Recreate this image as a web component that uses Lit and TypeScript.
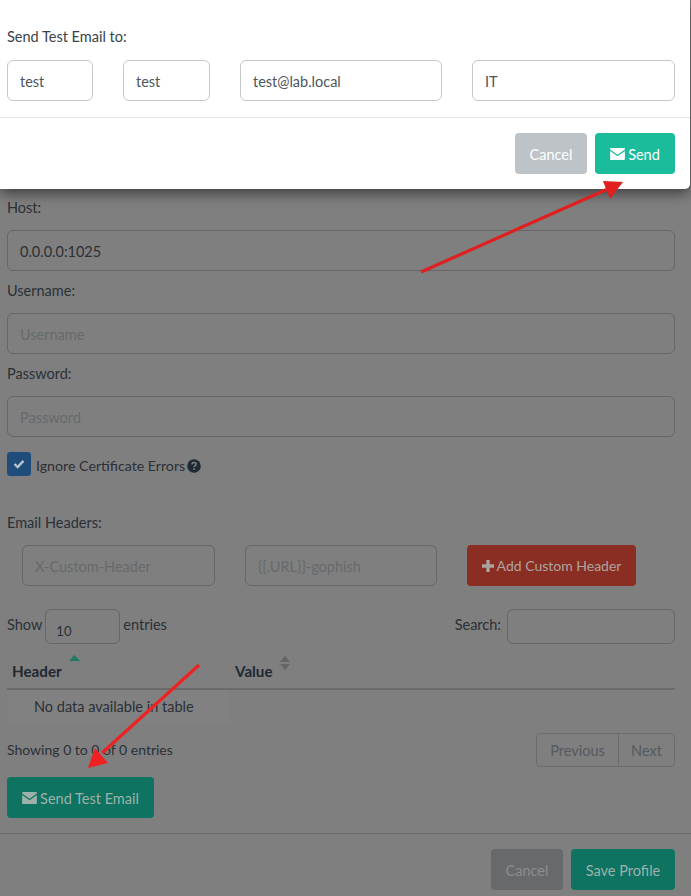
import { LitElement, html, css, svg } from "lit";
import { customElement } from "lit/decorators.js";

const envelope = () => html`<svg class="env" viewBox="0 0 16 13" aria-hidden="true">
  <path fill="currentColor" d="M1.2 0H14.8C15.5 0 16 .5 16 1.2V1.6L8 7.4 0 1.6V1.2C0 .5.5 0 1.2 0Z"/>
  <path fill="currentColor" d="M0 3.2 8 9 16 3.2V11.8C16 12.5 15.5 13 14.8 13H1.2C.5 13 0 12.5 0 11.8Z"/>
</svg>`;

@customElement("app-root")
export class AppRoot extends LitElement {
  static styles = css`
    :host { display: block; width: 691px; height: 896px; }
    * { box-sizing: border-box; }
    .page {
      position: relative; width: 691px; height: 896px; overflow: hidden;
      background: #7f7f7f; color: #2b3036;
      font-family: "Lato", "Liberation Sans", sans-serif; font-size: 14.5px; line-height: 20px;
    }
    .form { display: flex; flex-direction: column; padding: 197px 16px 0 7px; }
    label, .label { display: block; height: 20px; padding-top: 1px; }
    .gap-label { margin-top: 9px; }
    .field { margin-top: 13px; }
    input {
      display: block; width: 100%; height: 41px; padding: 1px 12px 0; margin: 0;
      border: 1px solid #666; border-radius: 6px; background: transparent;
      font: inherit; color: #2b3036; outline: none;
    }
    input::placeholder { color: #666a6d; opacity: 1; }
    .check-row { display: flex; align-items: center; gap: 5px; margin-top: 15px; height: 24px; font-size: 14.2px; }
    .check {
      width: 24px; height: 24px; border-radius: 3px; background: #1e4d7b;
      display: flex; align-items: center; justify-content: center;
    }
    .check svg { width: 12px; height: 10px; }
    .check-text { margin-top: 4px; }
    .help { width: 14px; height: 14px; margin: 4px 0 0 -3px; }
    .headers-label { margin-top: 36px; }
    .header-row { display: flex; margin-top: 13px; padding-left: 15px; }
    .hname { width: 193px; flex: none; }
    .hvalue { width: 192px; flex: none; margin-left: 30px; }
    .btn {
      display: inline-flex; align-items: center; justify-content: center; gap: 3px;
      height: 41px; padding-top: 2px; border-radius: 4px; white-space: nowrap;
    }
    .add { width: 169px; margin-left: 30px; padding-top: 0; background: #8a2d22; color: #ada49f; font-size: 14px; }
    .add svg { width: 12px; height: 12px; }
    .table-tools { display: flex; align-items: center; margin-top: 23px; height: 35px; }
    .table-tools span { margin-bottom: 4px; }
    .len { width: 75px; height: 35px; margin: 0 3px 0 3px; padding: 9px 10px 0; font-size: 13px; }
    .table-tools .search-label { margin-left: auto; margin-right: 6px; }
    .search { width: 168px; height: 35px; }
    .thead {
      display: grid; grid-template-columns: 223px 1fr; height: 46px;
      border-bottom: 2px solid #6b6b6b; font-weight: 700; font-size: 15.2px; color: #1f2833;
    }
    .th { position: relative; padding: 17px 5px 0; }
    .caret { position: absolute; }
    .caret-up { left: 62px; top: 11px; width: 11px; height: 6px; }
    .caret-both { left: 50px; top: 12px; width: 10px; height: 14px; }
    .row { width: 223px; height: 34px; padding-left: 27px; display: flex; align-items: center; background: #818181; }
    .footer { display: flex; align-items: center; justify-content: space-between; margin-top: 9px; height: 34px; }
    .info { font-size: 14px; }
    .pager { display: flex; height: 34px; border: 1px solid #6d6d6d; border-radius: 4px; color: #555a5e; }
    .pager span { display: flex; align-items: center; justify-content: center; padding-top: 1px; }
    .prev { width: 82px; border-right: 1px solid #6d6d6d; }
    .next { width: 55px; }
    .test { width: 147px; margin-top: 10px; background: #0e7360; color: #9fb1ab; }
    .env { width: 15px; height: 12px; flex: none; margin-top: -1px; }
    hr { margin: 15px -16px 0 -7px; border: 0; border-top: 1px solid #6e6e6e; }
    .actions { display: flex; justify-content: flex-end; gap: 8px; margin-top: 15px; }
    .cancel-dim { width: 72px; background: #68696b; color: #8b8d8f; }
    .save { width: 104px; background: #0e7360; color: #9fb1ab; }

    .modal {
      position: absolute; left: 0; top: 0; width: 690px; height: 189px;
      background: #fff; border-bottom-right-radius: 5px;
      box-shadow: 0 4px 14px rgba(0,0,0,.55);
      display: flex; flex-direction: column; color: #37424a;
    }
    .modal-body { padding: 26px 15px 0 7px; height: 117px; }
    .modal-inputs { display: flex; margin-top: 14px; }
    .modal-inputs input { border-color: #c4c8cb; color: #4c565d; }
    .m1 { width: 86px; flex: none; }
    .m2 { width: 87px; flex: none; margin-left: 30px; }
    .m3 { width: 202px; flex: none; margin-left: 30px; }
    .m4 { width: 203px; flex: none; margin-left: 30px; }
    .modal-foot {
      border-top: 1px solid #e5e5e5; padding: 15px 15px 0 0;
      display: flex; justify-content: flex-end; gap: 8px;
    }
    .mcancel { width: 72px; background: #bdc3c7; color: #fff; }
    .msend { width: 80px; background: #1abc9c; color: #fff; }
    .arrows { position: absolute; inset: 0; width: 691px; height: 896px; pointer-events: none; }
  `;

  render() {
    return html`<div class="page">
      <div class="form">
        <label>Host:</label>
        <input class="field" value="0.0.0.0:1025" />
        <label class="gap-label">Username:</label>
        <input class="field" placeholder="Username" />
        <label class="gap-label">Password:</label>
        <input class="field" placeholder="Password" />
        <div class="check-row">
          <div class="check">
            <svg viewBox="0 0 12 10"><path d="M1.5 5 4.6 8 10.5 1.8" fill="none" stroke="#b7c4d1" stroke-width="2.4"/></svg>
          </div>
          <span class="check-text">Ignore Certificate Errors</span>
          <svg class="help" viewBox="0 0 14 14">
            <circle cx="7" cy="7" r="6.8" fill="#1f2a35"/>
            <path d="M4.9 5.4C5 4.2 5.9 3.6 7 3.6 8.2 3.6 9.1 4.3 9.1 5.3 9.1 6.6 7.1 6.7 7.1 8.2" fill="none" stroke="#7f7f7f" stroke-width="1.5"/>
            <rect x="6.2" y="9.2" width="1.7" height="1.7" fill="#7f7f7f"/>
          </svg>
        </div>
        <label class="headers-label">Email Headers:</label>
        <div class="header-row">
          <input class="hname" placeholder="X-Custom-Header" />
          <input class="hvalue" placeholder="{{.URL}}-gophish" />
          <div class="btn add">
            <svg viewBox="0 0 11 11"><path fill="currentColor" d="M4 0H7V4H11V7H7V11H4V7H0V4H4Z"/></svg>
            <span>Add Custom Header</span>
          </div>
        </div>
        <div class="table-tools">
          <span>Show</span>
          <input class="len" value="10" />
          <span>entries</span>
          <span class="search-label">Search:</span>
          <input class="search" />
        </div>
        <div class="thead">
          <div class="th">Header
            <svg class="caret caret-up" viewBox="0 0 11 6"><path fill="#1f7a66" d="M5.5 0 11 6H0Z"/></svg>
          </div>
          <div class="th">Value
            <svg class="caret caret-both" viewBox="0 0 10 14"><path fill="#666" d="M5 0 10 6H0ZM0 8H10L5 14Z"/></svg>
          </div>
        </div>
        <div class="row">No data available in table</div>
        <div class="footer">
          <span class="info">Showing 0 to 0 of 0 entries</span>
          <div class="pager"><span class="prev">Previous</span><span class="next">Next</span></div>
        </div>
        <div class="btn test">${envelope()}<span>Send Test Email</span></div>
        <hr />
        <div class="actions">
          <div class="btn cancel-dim">Cancel</div>
          <div class="btn save">Save Profile</div>
        </div>
      </div>

      <div class="modal">
        <div class="modal-body">
          <div class="label">Send Test Email to:</div>
          <div class="modal-inputs">
            <input class="m1" value="test" />
            <input class="m2" value="test" />
            <input class="m3" value="test@lab.local" />
            <input class="m4" value="IT" />
          </div>
        </div>
        <div class="modal-foot">
          <div class="btn mcancel">Cancel</div>
          <div class="btn msend">${envelope()}<span>Send</span></div>
        </div>
      </div>

      <svg class="arrows" viewBox="0 0 691 896" aria-hidden="true">
        ${svg`<path d="M421 272 610 188" stroke="#e01f1f" stroke-width="3.2" fill="none"/>
        <path d="M623 182 603 181 610 199Z" fill="#e01f1f"/>
        <path d="M199 665 102 753" stroke="#ee2222" stroke-width="3.2" fill="none"/>
        <path d="M88 768 95 748 108 763Z" fill="#ee2222"/>`}
      </svg>
    </div>`;
  }
}
